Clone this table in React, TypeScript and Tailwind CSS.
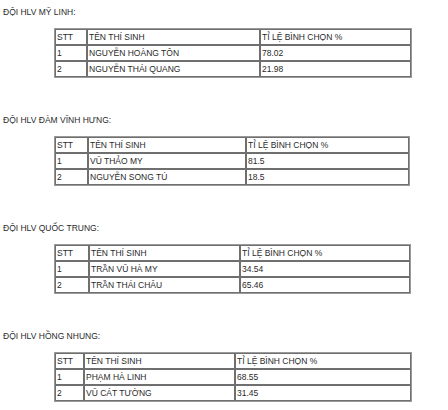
import React from "react";

type Team = {
  title: string;
  cols: [string, string, string];
  rows: { stt: string; name: string; pct: string }[];
};

const TEAMS: Team[] = [
  {
    title: "ĐỘI HLV MỸ LINH:",
    cols: ["w-[32px]", "w-[173px]", "w-[151px]"],
    rows: [
      { stt: "1", name: "NGUYỄN HOÀNG TÔN", pct: "78.02" },
      { stt: "2", name: "NGUYỄN THÁI QUANG", pct: "21.98" },
    ],
  },
  {
    title: "ĐỘI HLV ĐÀM VĨNH HƯNG:",
    cols: ["w-[33px]", "w-[158px]", "w-[163px]"],
    rows: [
      { stt: "1", name: "VŨ THẢO MY", pct: "81.5" },
      { stt: "2", name: "NGUYỄN SONG TÚ", pct: "18.5" },
    ],
  },
  {
    title: "ĐỘI HLV QUỐC TRUNG:",
    cols: ["w-[34px]", "w-[151px]", "w-[170px]"],
    rows: [
      { stt: "1", name: "TRẦN VŨ HÀ MY", pct: "34.54" },
      { stt: "2", name: "TRẦN THÁI CHÂU", pct: "65.46" },
    ],
  },
  {
    title: "ĐỘI HLV HỒNG NHUNG:",
    cols: ["w-[29px]", "w-[151px]", "w-[176px]"],
    rows: [
      { stt: "1", name: "PHẠM HÀ LINH", pct: "68.55" },
      { stt: "2", name: "VŨ CÁT TƯỜNG", pct: "31.45" },
    ],
  },
];

const cell =
  "h-[16px] border border-[#6f6f6f] px-px py-0 text-left align-middle font-normal leading-none";

const TeamTable = ({ team }: { team: Team }) => (
  <div>
    <p className="pl-[3px] text-[8.5px] leading-[12px] text-[#2a2a2a]">{team.title}</p>
    <table className="ml-[54px] mt-[10px] w-[356px] table-fixed border-separate border-spacing-0 border border-[#9a9a9a] text-[8.5px] text-[#2a2a2a]">
      <colgroup>
        {team.cols.map((c, i) => (
          <col key={i} className={c} />
        ))}
      </colgroup>
      <thead>
        <tr>
          <th className={cell}>STT</th>
          <th className={cell}>TÊN THÍ SINH</th>
          <th className={cell}>TỈ LỆ BÌNH CHỌN %</th>
        </tr>
      </thead>
      <tbody>
        {team.rows.map((r) => (
          <tr key={r.stt}>
            <td className={cell}>{r.stt}</td>
            <td className={cell}>{r.name}</td>
            <td className={cell}>{r.pct}</td>
          </tr>
        ))}
      </tbody>
    </table>
  </div>
);

export default function App() {
  return (
    <div className="flex h-[410px] w-[448px] flex-col gap-[36px] bg-white pt-[6px] font-['Liberation_Sans',Arial,sans-serif]">
      {TEAMS.map((t) => (
        <TeamTable key={t.title} team={t} />
      ))}
    </div>
  );
}
